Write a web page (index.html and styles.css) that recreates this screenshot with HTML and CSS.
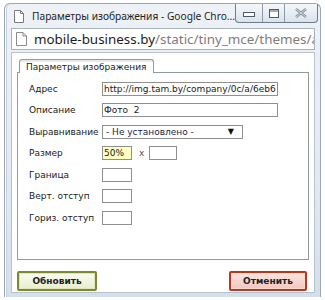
FILE: index.html
```html
<!DOCTYPE html>
<html lang="ru">
<head>
  <meta charset="UTF-8">
  <title>Параметры изображения</title>
  <link rel="stylesheet" href="styles.css">
</head>
<body>
  <div class="window">
    <div class="titlebar">
      <svg class="page-icon" width="10" height="13" viewBox="0 0 10 13">
        <path d="M0.5 0.5 H6.5 L9.5 3.5 V12.5 H0.5 Z M6.5 0.5 V3.5 H9.5" fill="#fff" stroke="#7a7a7a"/>
      </svg>
      <span class="title">Параметры изображения - Google Chro...</span>
      <div class="controls">
        <div class="ctl min">
          <svg width="12" height="6" viewBox="0 0 12 6">
            <rect x="0.5" y="0.5" width="11" height="4" fill="#fff" stroke="#4f5a67"/>
          </svg>
        </div>
        <div class="ctl max">
          <svg width="10" height="9" viewBox="0 0 10 9">
            <rect x="0.5" y="0.5" width="9" height="8" fill="#fff" stroke="#4f5a67"/>
            <path d="M1 2 H9" stroke="#4f5a67"/>
          </svg>
        </div>
        <div class="ctl close">
          <svg width="12" height="10" viewBox="0 0 12 10">
            <path d="M1 1 L11 9 M11 1 L1 9" stroke="#7d8895" stroke-width="2.4"/>
            <path d="M1 1 L11 9 M11 1 L1 9" stroke="#f1f4f7" stroke-width="0.8"/>
          </svg>
        </div>
      </div>
    </div>

    <div class="addressbar">
      <svg class="page-icon" width="11" height="14" viewBox="0 0 11 14">
        <path d="M0.5 0.5 H7 L10.5 4 V13.5 H0.5 Z M7 0.5 V4 H10.5" fill="#fff" stroke="#8a8a8a"/>
      </svg>
      <span class="host">mobile-business.by</span><span class="path">/static/tiny_mce/themes/ac</span>
    </div>

    <div class="page">
      <div class="tabs">
        <span class="tab">Параметры изображения</span>
      </div>
      <div class="panel">
        <div class="row">
          <span class="label">Адрес</span>
          <span class="field wide">http://img.tam.by/company/0c/a/6eb6</span>
        </div>
        <div class="row">
          <span class="label">Описание</span>
          <span class="field wide">Фото&nbsp; 2</span>
        </div>
        <div class="row">
          <span class="label">Выравнивание</span>
          <span class="field select">- Не установлено -<b>▼</b></span>
        </div>
        <div class="row">
          <span class="label">Размер</span>
          <span class="field small filled">50%</span>
          <span class="times">x</span>
          <span class="field tiny"></span>
        </div>
        <div class="row">
          <span class="label">Граница</span>
          <span class="field small"></span>
        </div>
        <div class="row">
          <span class="label">Верт. отступ</span>
          <span class="field small"></span>
        </div>
        <div class="row">
          <span class="label">Гориз. отступ</span>
          <span class="field small"></span>
        </div>
      </div>
      <div class="actions">
        <button class="btn update">Обновить</button>
        <button class="btn cancel">Отменить</button>
      </div>
    </div>
  </div>
</body>
</html>
```

FILE: styles.css
```css
body {
  margin: 0;
  background: #fff;
  font-family: "DejaVu Sans", Verdana, sans-serif;
}

.window {
  margin: 3px 0 0 4px;
  width: 317px;
  height: 294px;
  box-sizing: border-box;
  background: linear-gradient(to bottom, #eef2f7, #e3e9f0 60%, #d5dfea);
  border: 1px solid #9aa6b4;
  border-bottom: none;
  border-radius: 6px 6px 0 0;
  padding: 0 5px 4px 5px;
  display: flex;
  flex-direction: column;
  box-shadow: inset 1px 0 0 #fff, inset 2px 0 0 #c3d1e2;
}

.titlebar {
  height: 24px;
  display: flex;
  align-items: center;
  padding-left: 4px;
}

.titlebar .page-icon {
  margin-right: 8px;
  flex: none;
}

.title {
  font-family: "Noto Sans", sans-serif;
  font-size: 10.2px;
  color: #1e1e1e;
  white-space: nowrap;
  overflow: hidden;
  flex: 1;
  min-width: 0;
  margin-top: -1px;
}

.controls {
  display: flex;
  flex: none;
  align-self: flex-start;
  margin-right: -3px;
  border: 1px solid #6f7c8c;
  border-top: none;
  border-radius: 0 0 4px 4px;
  height: 18px;
  background: linear-gradient(to bottom, #f5f8fb, #d9e2ec);
}

.ctl {
  width: 26px;
  display: flex;
  align-items: center;
  justify-content: center;
  border-right: 1px solid #8d99a8;
}

.ctl.min svg {
  margin-top: 4px;
}

.ctl.max {
  width: 21px;
}

.ctl.close {
  width: 32px;
  border-right: none;
}

.addressbar {
  height: 22px;
  box-sizing: border-box;
  margin-left: 1px;
  background: #fff;
  border: 1px solid #a7b2bf;
  display: flex;
  align-items: center;
  padding-left: 4px;
  overflow: hidden;
  white-space: nowrap;
  font-family: "Noto Sans", sans-serif;
  font-size: 13.4px;
}

.addressbar .page-icon {
  margin-right: 7px;
  flex: none;
}

.host {
  color: #1c1c1c;
}

.path {
  color: #7d7d7d;
}

.page {
  flex: 1;
  margin-top: 2px;
  margin-left: 1px;
  background: #fff;
  border: 1px solid #b9c3ce;
  padding: 6px 5px 0 5px;
  font-size: 9px;
  color: #1a1a1a;
}

.tabs {
  display: flex;
  padding-left: 2px;
}

.tab {
  border: 1px solid #919b9c;
  border-bottom: none;
  border-radius: 3px 3px 0 0;
  padding: 2px 7px 1px 6px;
  line-height: 10px;
  background: #fff;
  margin-bottom: -1px;
  position: relative;
  box-shadow: inset 0 2px 0 #e6eaee;
}

.panel {
  border: 1px solid #919b9c;
  height: 188px;
  box-sizing: border-box;
  padding: 5px 0 0 11px;
}

.row {
  display: flex;
  align-items: center;
  height: 21.5px;
}

.label {
  width: 73px;
  flex: none;
  white-space: nowrap;
}

.field {
  height: 14px;
  box-sizing: border-box;
  border: 1px solid #8f8f8f;
  background: #fff;
  display: flex;
  align-items: center;
  padding-left: 1px;
  overflow: hidden;
  white-space: nowrap;
  font-size: 9px;
}

.field.wide {
  width: 176px;
}

.field.select {
  width: 141px;
  padding-left: 3px;
  color: #1c1c4a;
  justify-content: space-between;
  padding-right: 8px;
}

.field.select b {
  font-size: 8px;
  color: #111;
}

.field.small {
  width: 30px;
}

.field.tiny {
  width: 28px;
}

.field.filled {
  background: #ffffc0;
}

.times {
  margin: 0 5px 0 7px;
  color: #555;
}

.actions {
  display: flex;
  justify-content: space-between;
  padding: 11px 2px 0 0;
}

.btn {
  height: 20px;
  font-family: "DejaVu Sans", Verdana, sans-serif;
  font-size: 9px;
  font-weight: bold;
  color: #222;
  border-radius: 2px;
  padding: 0;
}

.btn.update {
  width: 80px;
  border: 2px solid #7b8a2f;
  background: linear-gradient(to bottom, #fbfcf2, #e8eccf);
  box-shadow: inset 0 0 0 1px #dfe6b8;
}

.btn.cancel {
  width: 78px;
  border: 2px solid #b8381d;
  background: linear-gradient(to bottom, #fbe5e0, #f3c6bd);
  box-shadow: inset 0 0 0 1px #f7d6cf;
}
```
